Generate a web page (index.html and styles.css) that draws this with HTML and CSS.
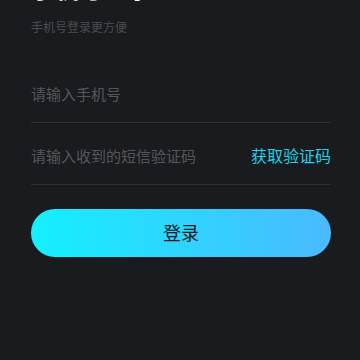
FILE: index.html
```html
<!DOCTYPE html>
<html lang="zh-CN">
<head>
  <meta charset="UTF-8">
  <meta name="viewport" content="width=device-width, initial-scale=1.0">
  <title>手机号登录</title>
  <link rel="stylesheet" href="styles.css">
</head>
<body>

<div class="login-page">
  <h1 class="login-title">手机号登录</h1>
  <p class="login-sub">手机号登录更方便</p>

  <div class="field">
    <input type="tel" class="field-input" placeholder="请输入手机号">
  </div>

  <div class="field">
    <input type="text" class="field-input" placeholder="请输入收到的短信验证码">
    <button class="get-code">获取验证码</button>
  </div>

  <button class="login-btn">登录</button>
</div>

</body>
</html>
```

FILE: styles.css
```css
body {
  margin: 0;
  overflow: hidden;
  background-color: #1a1b1f;
  font-family: "Noto Sans CJK SC", "Noto Sans", sans-serif;
}

.login-page {
  padding: 0 29px 0 31px;
}

.login-title {
  margin: -24px 0 0 0;
  font-size: 24px;
  line-height: 24px;
  font-weight: bold;
  color: #fff;
}

.login-sub {
  margin: 21px 0 0 0;
  font-size: 12px;
  line-height: 12px;
  color: #4a4b50;
}

.field {
  display: flex;
  align-items: center;
  height: 62px;
  padding-top: 3px;
  box-sizing: border-box;
  border-bottom: 1px solid #2e2f33;
}

.field:first-of-type {
  margin-top: 28px;
}

.field-input {
  flex: 1;
  min-width: 0;
  padding: 0;
  border: none;
  outline: none;
  background: transparent;
  font-family: inherit;
  font-size: 15px;
  color: #ddd;
}

.field-input::placeholder {
  color: #55565b;
}

.get-code {
  padding: 0;
  border: none;
  background: transparent;
  font-family: inherit;
  font-size: 16px;
  color: #1fd4e6;
  cursor: pointer;
}

.login-btn {
  display: block;
  width: 100%;
  height: 48px;
  margin-top: 24px;
  padding: 0 0 3px 0;
  border: none;
  border-radius: 24px;
  background: linear-gradient(to right, #14f0ff, #4ab9ff);
  font-family: inherit;
  font-size: 18px;
  color: #1a1b20;
  cursor: pointer;
}
```
